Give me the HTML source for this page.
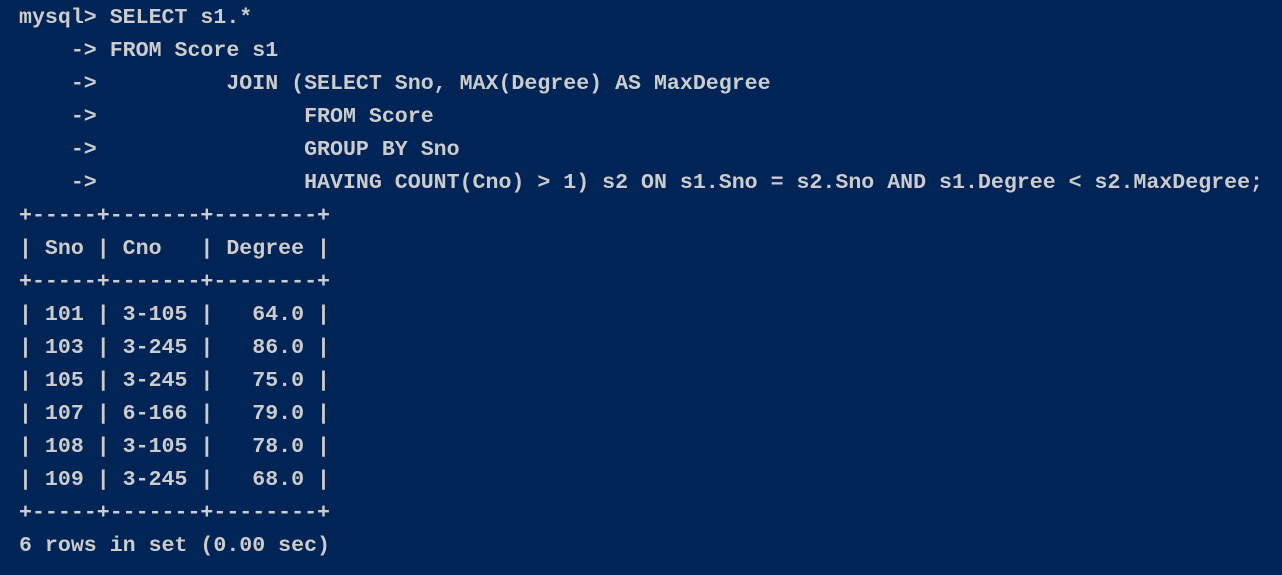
<!DOCTYPE html>
<html><head><meta charset="utf-8"><style>
html,body{margin:0;padding:0;background:#012456;width:1282px;height:575px;overflow:hidden}
pre{margin:0;padding:2px 0 0 19px;font-family:"Liberation Mono",monospace;font-weight:bold;font-size:21.6px;line-height:33px;color:#cccccc;white-space:pre}
</style></head><body><pre>mysql&gt; SELECT s1.*
    -&gt; FROM Score s1
    -&gt;          JOIN (SELECT Sno, MAX(Degree) AS MaxDegree
    -&gt;                FROM Score
    -&gt;                GROUP BY Sno
    -&gt;                HAVING COUNT(Cno) &gt; 1) s2 ON s1.Sno = s2.Sno AND s1.Degree &lt; s2.MaxDegree;
+-----+-------+--------+
| Sno | Cno   | Degree |
+-----+-------+--------+
| 101 | 3-105 |   64.0 |
| 103 | 3-245 |   86.0 |
| 105 | 3-245 |   75.0 |
| 107 | 6-166 |   79.0 |
| 108 | 3-105 |   78.0 |
| 109 | 3-245 |   68.0 |
+-----+-------+--------+
6 rows in set (0.00 sec)</pre></body></html>
